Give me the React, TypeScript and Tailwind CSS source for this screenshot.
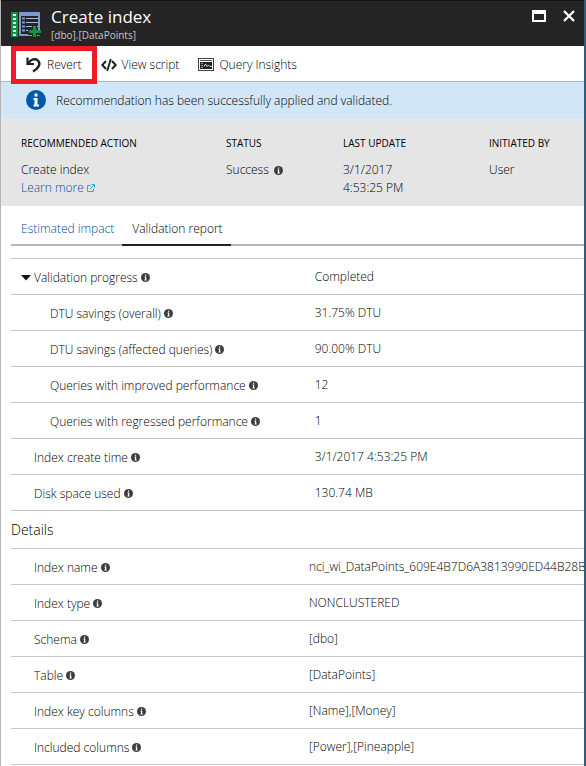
import React from "react";

type Row = { label: string; value: string; indent?: boolean; expandable?: boolean };

const validationRows: Row[] = [
  { label: "Validation progress", value: "Completed", expandable: true },
  { label: "DTU savings (overall)", value: "31.75% DTU", indent: true },
  { label: "DTU savings (affected queries)", value: "90.00% DTU", indent: true },
  { label: "Queries with improved performance", value: "12", indent: true },
  { label: "Queries with regressed performance", value: "1", indent: true },
  { label: "Index create time", value: "3/1/2017 4:53:25 PM" },
  { label: "Disk space used", value: "130.74 MB" },
];

const detailRows: Row[] = [
  { label: "Index name", value: "nci_wi_DataPoints_609E4B7D6A3813990ED44B28B34" },
  { label: "Index type", value: "NONCLUSTERED" },
  { label: "Schema", value: "[dbo]" },
  { label: "Table", value: "[DataPoints]" },
  { label: "Index key columns", value: "[Name],[Money]" },
  { label: "Included columns", value: "[Power],[Pineapple]" },
];

function InfoDot() {
  return (
    <svg className="h-[9px] w-[9px] shrink-0" viewBox="0 0 9 9" aria-hidden="true">
      <circle cx="4.5" cy="4.5" r="4.5" fill="#3d3d3d" />
      <path d="M4 1.5h1.2v1.2H4zM3.5 3.6h1.7v3h.6v.9H3.4v-.9H4V4.5h-.5z" fill="#fff" />
    </svg>
  );
}

function IndexLogo() {
  return (
    <svg className="h-[25px] w-[30px] shrink-0" viewBox="0 0 30 25" aria-hidden="true">
      <rect x="0" y="0" width="7" height="25" rx="1" fill="#0f9447" />
      {[2, 6, 10, 14, 18, 22].map((y) => (
        <rect key={y} x="2" y={y} width="3" height="2" fill="#dff7e8" />
      ))}
      <rect x="8" y="0" width="21" height="24" rx="1" fill="#8099cc" />
      <path d="M10 4h17v18H10z" fill="#252525" />
      <path d="M11 6.500h3M11 10.500h3M11 14.500h3M11 18.500h3" stroke="#8099cc" strokeWidth="2" />
      <path d="M15 6.500h12M15 10.500h12M15 14.500h12M15 18.500h12" stroke="#a9badd" />
      <path d="M21 13h5v5h4v5h-4v2h-5v-2h-4v-5h4z" fill="#252525" />
      <path d="M22 14h3v4h5v3h-5v4h-3v-4h-4v-3h4z" fill="#0f9447" />
    </svg>
  );
}

function RevertIcon() {
  return (
    <svg className="h-4 w-4 shrink-0" viewBox="0 0 16 16" fill="none" aria-hidden="true">
      <path d="M2.500 6C5 2.500 9 1 11.700 3.300C15 6 13.500 10.500 7 14.500" stroke="#1e1e1e" strokeWidth="2.400" />
      <path d="M1.500 0.500V7H8" stroke="#1e1e1e" strokeWidth="2.200" />
    </svg>
  );
}

function CodeIcon() {
  return (
    <svg className="h-4 w-4 shrink-0" viewBox="0 0 16 16" fill="none" stroke="#1e1e1e" strokeWidth="1.900" aria-hidden="true">
      <path d="M5 4L1.300 8L5 12M11 4l3.700 4L11 12M9.800 2L6.200 14" />
    </svg>
  );
}

function InsightsIcon() {
  return (
    <svg className="h-4 w-4 shrink-0" viewBox="0 0 16 16" fill="none" aria-hidden="true">
      <rect x=".5" y="1.500" width="15" height="12" fill="#fff" stroke="#444" />
      <path d="M2 3.500h12" stroke="#555" />
      <rect x="2" y="5" width="12" height="7" fill="#222" />
      <path d="M3 6.500h2M3 8.500h2M3 10.500h2" stroke="#bbb" strokeWidth=".8" />
      <path d="M6 9.500L7.500 7L9 9.500L10.500 8L12 9.500h2" stroke="#fff" strokeWidth=".8" />
    </svg>
  );
}

function DataTable({ rows, caption, labelWidth }: { rows: Row[]; caption: string; labelWidth: string }) {
  return (
    <table aria-label={caption} className="w-full table-fixed border-collapse border-t border-[#c6c6c6]">
      <tbody>
        {rows.map((row) => (
          <tr key={row.label} className="h-9 border-b border-[#c6c6c6]">
            <th scope="row" className={`${labelWidth} p-0 text-left font-light`}>
              <div className={`flex items-center gap-[3px] pt-0.5 ${row.indent ? "pl-[39px]" : row.expandable ? "pl-2.5" : "pl-[23px]"}`}>
                {row.expandable && (
                  <button type="button" aria-label="Collapse validation progress" aria-expanded="true">
                    <svg className="h-[6px] w-[10px]" viewBox="0 0 10 6" aria-hidden="true">
                      <path d="M0 0h10L5 5.500z" fill="#111" />
                    </svg>
                  </button>
                )}
                <span>{row.label}</span>
                <InfoDot />
              </div>
            </th>
            <td className="p-0 whitespace-nowrap">{row.value}</td>
          </tr>
        ))}
      </tbody>
    </table>
  );
}

export default function App() {
  return (
    <main className="min-h-screen overflow-hidden border-r-2 border-l border-r-[#2b5f80] border-l-[#b5b5b5] bg-white font-['Open_Sans','Noto_Sans',sans-serif] text-[12px] leading-[18px] font-light text-black">
      <header className="flex h-[46px] items-start border-t border-[#151515] bg-[#252525] pr-[7px] pl-2.5 text-white">
        <div className="pt-[11px]">
          <IndexLogo />
        </div>
        <div className="ml-2.5 flex-1 pt-1">
          <h1 className="text-[17px] leading-6 font-normal">Create index</h1>
          <p className="text-[10px] leading-3 font-normal text-[#c8c8c8]">[dbo].[DataPoints]</p>
        </div>
        <div className="flex gap-[14px] pt-[7px]">
          <button type="button" aria-label="Maximize" className="flex h-4 w-4 items-center justify-center">
            <svg className="h-3 w-[14px]" viewBox="0 0 14 12" aria-hidden="true">
              <path d="M0 0h14v12H0zM2 4v6h10V4z" fill="#fff" fillRule="evenodd" />
            </svg>
          </button>
          <button type="button" aria-label="Close" className="flex h-4 w-4 items-center justify-center">
            <svg className="h-3 w-3" viewBox="0 0 12 12" aria-hidden="true">
              <path d="M1 1l10 10M11 1L1 11" stroke="#fff" strokeWidth="2.200" />
            </svg>
          </button>
        </div>
      </header>

      <div role="toolbar" aria-label="Commands" className="flex h-9 items-center gap-[19px] border-b border-[#b0b8bf] pt-0.5 pl-[25px]">
        <button type="button" className="relative flex items-center gap-[5px]">
          <RevertIcon />
          Revert
          <span aria-hidden="true" className="absolute -inset-x-[15px] -inset-y-[10px] border-[5px] border-[#ed1c24]" />
        </button>
        <button type="button" className="flex items-center gap-[5px]">
          <CodeIcon />
          View script
        </button>
        <button type="button" className="flex items-center gap-[5px]">
          <InsightsIcon />
          Query Insights
        </button>
      </div>

      <div role="status" className="flex h-9 items-center gap-2.5 bg-[#d1e6f6] pl-[25px]">
        <svg className="h-5 w-5 shrink-0" viewBox="0 0 20 20" aria-hidden="true">
          <circle cx="10" cy="10" r="10" fill="#0058ad" />
          <path d="M8.500 3.500h3v3h-3zM7.500 8h4v6.500H13v2H7.500v-2h1V10h-1z" fill="#fff" />
        </svg>
        <span className="pt-0.5">Recommendation has been successfully applied and validated.</span>
      </div>

      <dl className="grid h-[88px] grid-cols-[205fr_117fr_146fr_95fr] bg-[#e5e5e5] pt-4 pl-5">
        <div>
          <dt className="mb-[9px] text-[10px] font-normal">RECOMMENDED ACTION</dt>
          <dd>
            Create index
            <br />
            <a href="#learn-more" className="inline-flex items-center gap-[3px] text-[#004f9e]">
              Learn more
              <svg className="h-2 w-2" viewBox="0 0 8 8" fill="none" stroke="#3aa5cf" aria-hidden="true">
                <path d="M3.500 1.500h-3v6h6v-3M3 5l4.500-4.500M4.500.5h3v3" />
              </svg>
            </a>
          </dd>
        </div>
        <div>
          <dt className="mb-[9px] text-[10px] font-normal">STATUS</dt>
          <dd className="flex items-center gap-[5px]">
            Success <InfoDot />
          </dd>
        </div>
        <div>
          <dt className="mb-[9px] text-[10px] font-normal">LAST UPDATE</dt>
          <dd>
            3/1/2017
            <br />
            4:53:25 PM
          </dd>
        </div>
        <div>
          <dt className="mb-[9px] text-[10px] font-normal">INITIATED BY</dt>
          <dd>User</dd>
        </div>
      </dl>

      <div className="pl-2.5">
        <div role="tablist" className="mb-3 flex h-10 items-stretch border-b-2 border-[#b8b8b8]">
          <button type="button" role="tab" aria-selected="false" className="pt-2 pr-2 pl-2.5 text-[#004f9e]">
            Estimated impact
          </button>
          <button type="button" role="tab" aria-selected="true" className="-mb-0.5 border-b-2 border-[#222] pt-2 pr-2 pl-2.5">
            Validation report
          </button>
        </div>
        <DataTable rows={validationRows} caption="Validation report" labelWidth="w-[53%]" />
        <h2 className="flex h-[37px] items-center text-[14px]">Details</h2>
        <DataTable rows={detailRows} caption="Details" labelWidth="w-[52%]" />
      </div>
    </main>
  );
}
